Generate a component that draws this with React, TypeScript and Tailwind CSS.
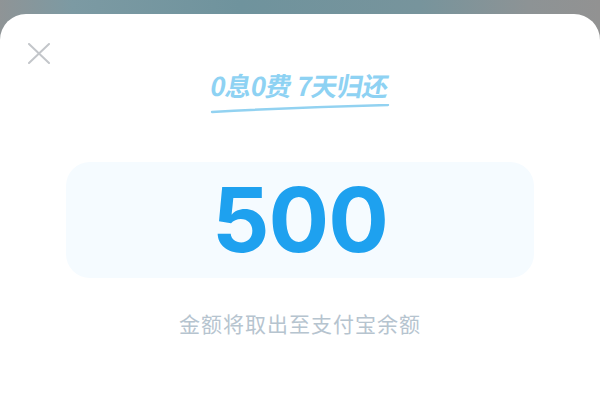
export default function App() {
  return (
    <div className="flex h-[400px] w-[600px] flex-col bg-[linear-gradient(90deg,#8f9496_0%,#7c9aa3_12%,#6f939d_40%,#77949c_70%,#8d9395_88%,#929292_100%)] pt-[14px] font-['Noto_Sans_CJK_SC',sans-serif]">
      <div className="flex flex-1 flex-col rounded-t-[26px] bg-white">
        <div className="flex h-[50px] items-end px-[28px]">
          <svg width="22" height="21" viewBox="0 0 22 21">
            <path d="M1 1 L21 20 M21 1 L1 20" stroke="#c3c6ca" strokeWidth="2" strokeLinecap="round" />
          </svg>
        </div>
        <div className="flex flex-col items-center pt-[6px]">
          <div className="skew-x-[-10deg] text-[26px] font-semibold leading-[30px] tracking-[-0.5px] text-[#8ed2f3]">
            0息0费 7天归还
          </div>
          <svg width="180" height="10" viewBox="0 0 180 10" className="mt-[4px]">
            <path
              d="M2 8 Q 90 3 178 1"
              stroke="#92d2f1"
              strokeWidth="2.4"
              fill="none"
              strokeLinecap="round"
            />
          </svg>
        </div>
        <div className="mx-[66px] mt-[48px] flex h-[116px] items-center justify-center rounded-[24px] bg-[#f5fbff]">
          <span className="font-['Inter',sans-serif] text-[90px] font-bold leading-none tracking-[-1px] text-[#1ea1ef]">
            500
          </span>
        </div>
        <div className="mt-[31px] text-center text-[21px] leading-[28px] tracking-[1px] text-[#b6c4cf]">
          金额将取出至支付宝余额
        </div>
      </div>
    </div>
  );
}
